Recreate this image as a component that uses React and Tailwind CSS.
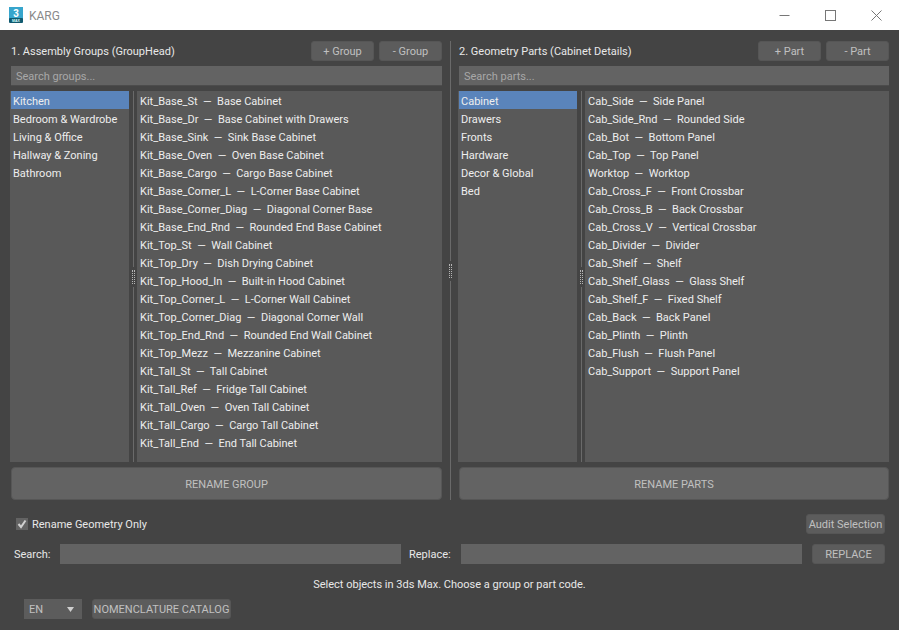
const font = { fontFamily: 'Roboto,"Noto Sans",sans-serif' };

const groups = ["Kitchen", "Bedroom & Wardrobe", "Living & Office", "Hallway & Zoning", "Bathroom"];
const groupItems = [
  ["Kit_Base_St", "Base Cabinet"], ["Kit_Base_Dr", "Base Cabinet with Drawers"], ["Kit_Base_Sink", "Sink Base Cabinet"],
  ["Kit_Base_Oven", "Oven Base Cabinet"], ["Kit_Base_Cargo", "Cargo Base Cabinet"], ["Kit_Base_Corner_L", "L-Corner Base Cabinet"],
  ["Kit_Base_Corner_Diag", "Diagonal Corner Base"], ["Kit_Base_End_Rnd", "Rounded End Base Cabinet"], ["Kit_Top_St", "Wall Cabinet"],
  ["Kit_Top_Dry", "Dish Drying Cabinet"], ["Kit_Top_Hood_In", "Built-in Hood Cabinet"], ["Kit_Top_Corner_L", "L-Corner Wall Cabinet"],
  ["Kit_Top_Corner_Diag", "Diagonal Corner Wall"], ["Kit_Top_End_Rnd", "Rounded End Wall Cabinet"], ["Kit_Top_Mezz", "Mezzanine Cabinet"],
  ["Kit_Tall_St", "Tall Cabinet"], ["Kit_Tall_Ref", "Fridge Tall Cabinet"], ["Kit_Tall_Oven", "Oven Tall Cabinet"],
  ["Kit_Tall_Cargo", "Cargo Tall Cabinet"], ["Kit_Tall_End", "End Tall Cabinet"],
];
const parts = ["Cabinet", "Drawers", "Fronts", "Hardware", "Decor & Global", "Bed"];
const partItems = [
  ["Cab_Side", "Side Panel"], ["Cab_Side_Rnd", "Rounded Side"], ["Cab_Bot", "Bottom Panel"], ["Cab_Top", "Top Panel"], ["Worktop", "Worktop"],
  ["Cab_Cross_F", "Front Crossbar"], ["Cab_Cross_B", "Back Crossbar"], ["Cab_Cross_V", "Vertical Crossbar"], ["Cab_Divider", "Divider"],
  ["Cab_Shelf", "Shelf"], ["Cab_Shelf_Glass", "Glass Shelf"], ["Cab_Shelf_F", "Fixed Shelf"], ["Cab_Back", "Back Panel"], ["Cab_Plinth", "Plinth"],
  ["Cab_Flush", "Flush Panel"], ["Cab_Support", "Support Panel"],
];

function Btn({ children, className = "" }) {
  return (
    <button className={`flex items-center justify-center whitespace-nowrap rounded-[3px] border border-[#565656] text-[#c0c0c0] text-[11px] leading-none pt-[1px] ${className}`}>
      {children}
    </button>
  );
}

function Grip() {
  return (
    <div className="flex flex-col items-center justify-center h-full w-[8px] shrink-0">
      <div className="flex-1 w-px bg-[#6a6a6a]" />
      <div className="h-[14px] w-[3px] my-[3px] border-x border-dotted border-[#b5b5b5]" />
      <div className="flex-1 w-px bg-[#6a6a6a]" />
    </div>
  );
}

function Panel({ title, placeholder, add, remove, cats, selected, items, rename, width }) {
  return (
    <div className={`${width} flex flex-col`}>
      <div className="flex items-center justify-between h-[20px]">
        <span className="text-[#e8e8e8] pt-[2px] pl-[1px]">{title}</span>
        <div className="flex gap-[5px]">
          <Btn className="w-[63px] h-[20px] bg-[#5c5c5c]">{add}</Btn>
          <Btn className="w-[63px] h-[20px] bg-[#5c5c5c]">{remove}</Btn>
        </div>
      </div>
      <div className="mt-[5px] ml-[1px] h-[20px] bg-[#636363] text-[#a8a8a8] pl-[5px] leading-[21px] border-b border-[#4c4c4c]">{placeholder}</div>
      <div className="mt-[5px] h-[371px] flex text-[#eeeeee]">
        <div className="w-[119px] bg-[#595959] h-full pl-[1px]">
          {cats.map((t) => (
            <div key={t} className={`h-[18px] leading-[22px] pl-[2px] whitespace-nowrap ${t === selected ? "bg-[#5a84bb]" : ""}`}>{t}</div>
          ))}
        </div>
        <Grip />
        <div className="flex-1 bg-[#595959] h-full">
          {items.map(([a, b]) => (
            <div key={a} className="h-[18px] leading-[22px] pl-[3px] whitespace-pre">{a}{"  —  "}{b}</div>
          ))}
        </div>
      </div>
      <Btn className="mt-[5px] ml-[1px] h-[33px] rounded-[4px] bg-[#636363]">{rename}</Btn>
    </div>
  );
}

export default function App() {
  return (
    <div className="w-[899px] h-[630px] bg-[#444444] text-[11px] overflow-hidden flex flex-col" style={font}>
      <div className="h-[30px] bg-white flex items-center shrink-0 pl-[8px]">
        <svg width="16" height="18" viewBox="0 0 16 18" className="shrink-0">
          <path d="M1 1h14v13.5a1.5 1.5 0 0 1-1.5 1.5h-11A1.5 1.5 0 0 1 1 14.5z" fill="#37a5cc" />
          <rect x="1" y="12" width="14" height="5" rx="1" fill="#105a70" />
          <text x="8" y="11" fontSize="10" fontWeight="700" fill="#fff" textAnchor="middle" fontFamily="Liberation Sans">3</text>
          <text x="8" y="16" fontSize="3.5" fontWeight="700" fill="#dff" textAnchor="middle" fontFamily="Liberation Sans">MAX</text>
        </svg>
        <span className="ml-[5px] text-[#8a8a8a] text-[12px] pt-[1px]">KARG</span>
        <div className="ml-auto flex items-center pr-[17px] gap-[35px]">
          <svg width="11" height="11" viewBox="0 0 11 11"><path d="M0.5 5.5h10" stroke="#777" strokeWidth="1" /></svg>
          <svg width="11" height="11" viewBox="0 0 11 11"><rect x="0.5" y="0.5" width="10" height="10" fill="none" stroke="#777" strokeWidth="1" /></svg>
          <svg width="11" height="11" viewBox="0 0 11 11"><path d="M0.5 0.5l10 10M10.5 0.5l-10 10" stroke="#777" strokeWidth="1" /></svg>
        </div>
      </div>
      <div className="flex pl-[10px] pt-[11px]">
        <Panel width="w-[432px]" title="1. Assembly Groups (GroupHead)" placeholder="Search groups..." add="+ Group" remove="- Group" cats={groups} selected="Kitchen" items={groupItems} rename="RENAME GROUP" />
        <div className="w-[16px] flex justify-center">
          <Grip />
        </div>
        <Panel width="w-[431px]" title="2. Geometry Parts (Cabinet Details)" placeholder="Search parts..." add="+ Part" remove="- Part" cats={parts} selected="Cabinet" items={partItems} rename="RENAME PARTS" />
      </div>
      <div className="flex items-center justify-between h-[20px] mt-[14px] pl-[16px] pr-[14px]">
        <label className="flex items-center gap-[4px] text-[#e8e8e8]">
          <span className="w-[12px] h-[12px] bg-[#636363] flex items-center justify-center">
            <svg width="10" height="10" viewBox="0 0 10 10"><path d="M1.5 5l2.5 3 4.5-6.5" fill="none" stroke="#d0d0d0" strokeWidth="2" /></svg>
          </span>
          <span className="pt-[2px]">Rename Geometry Only</span>
        </label>
        <Btn className="w-[79px] h-[20px] bg-[#5c5c5c]">Audit Selection</Btn>
      </div>
      <div className="flex items-center h-[20px] mt-[10px] pl-[14px] pr-[14px] text-[#e8e8e8]">
        <span className="w-[46px] pt-[2px]">Search:</span>
        <div className="w-[341px] h-[20px] bg-[#636363]" />
        <span className="ml-[8px] w-[52px] pt-[2px]">Replace:</span>
        <div className="w-[341px] h-[20px] bg-[#636363]" />
        <Btn className="ml-auto w-[73px] h-[20px] bg-[#5c5c5c]">REPLACE</Btn>
      </div>
      <div className="text-center text-[#e8e8e8] mt-[10px] h-[20px] leading-[22px]">Select objects in 3ds Max. Choose a group or part code.</div>
      <div className="flex items-center gap-[10px] pl-[24px] mt-[5px]">
        <div className="w-[58px] h-[20px] bg-[#5c5c5c] text-[#c0c0c0] flex items-center justify-between pl-[5px] pr-[8px]">
          <span className="pt-[2px]">EN</span>
          <svg width="7" height="5" viewBox="0 0 7 5"><path d="M0 0h7L3.5 5z" fill="#cfcfcf" /></svg>
        </div>
        <Btn className="w-[139px] h-[20px] bg-[#5c5c5c]">NOMENCLATURE CATALOG</Btn>
      </div>
    </div>
  );
}
